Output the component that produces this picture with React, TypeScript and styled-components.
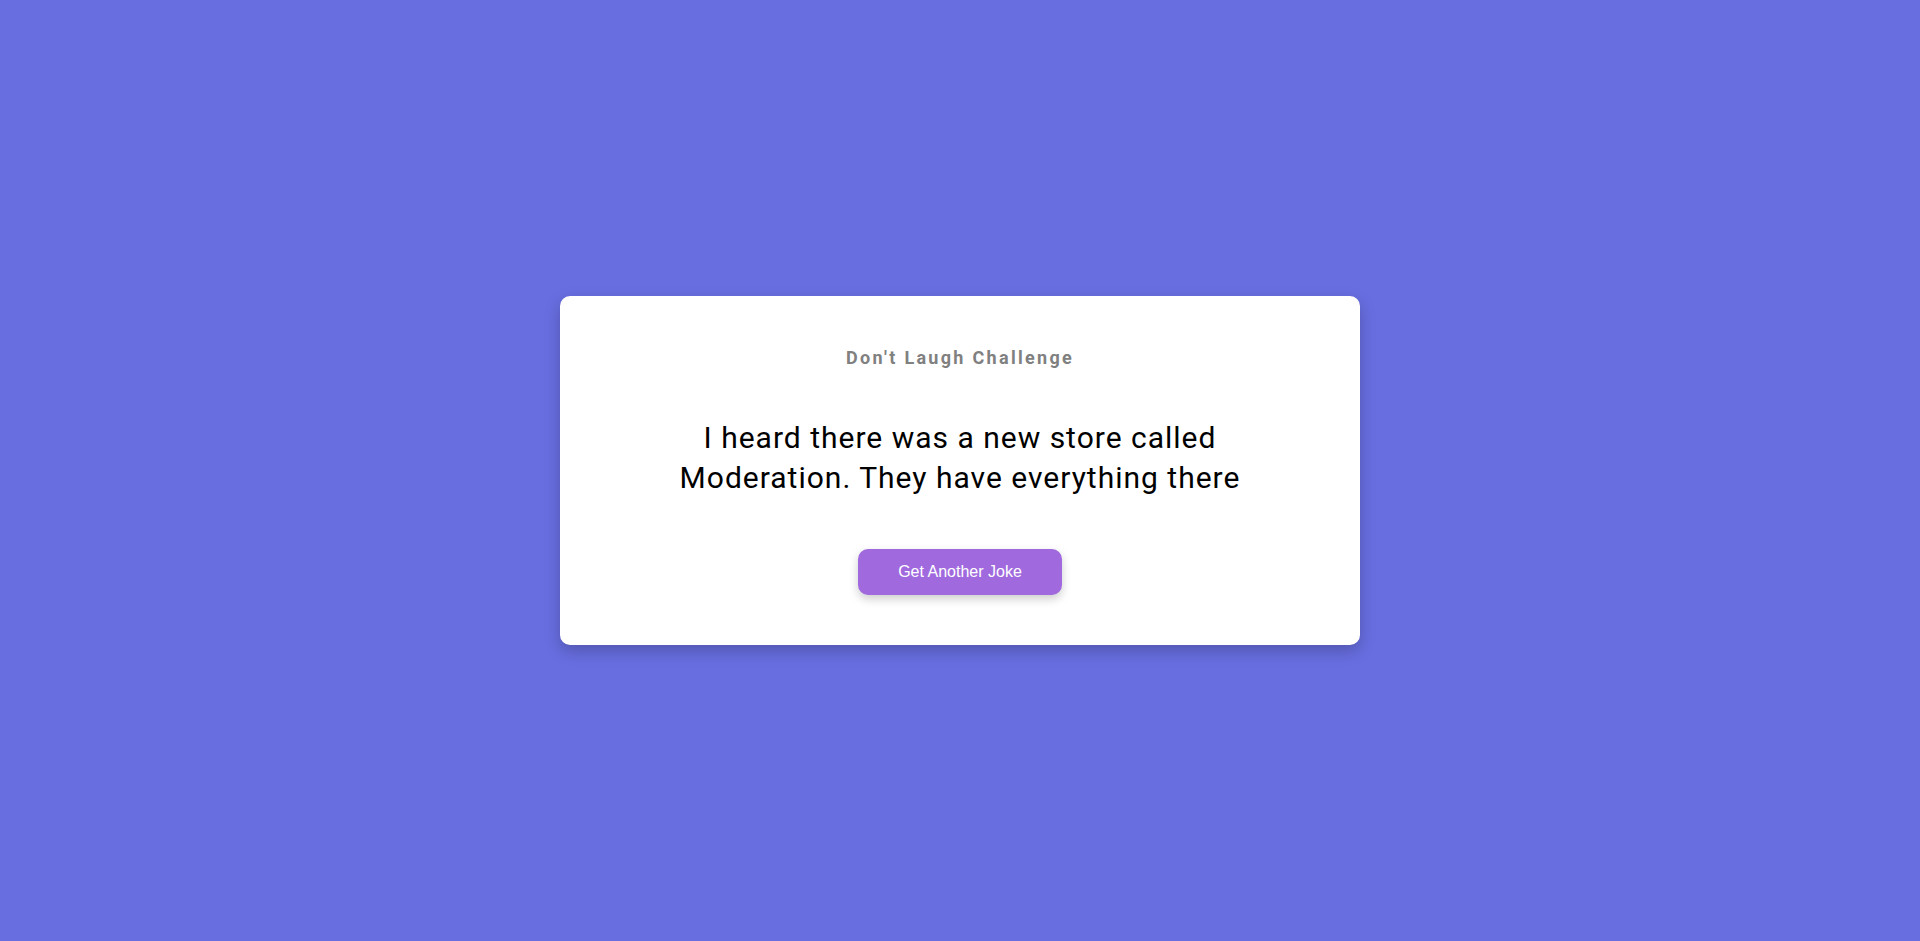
import React from "react";
import styled, { createGlobalStyle } from "styled-components";

const Global = createGlobalStyle`
  html, body { margin: 0; padding: 0; }
  body { background: #686ee0; font-family: Roboto, "Liberation Sans", sans-serif; }
`;

const Page = styled.main`
  min-height: 941px;
  display: flex;
  align-items: center;
  justify-content: center;
`;

const Card = styled.section`
  width: 800px;
  box-sizing: border-box;
  background: #ffffff;
  border-radius: 10px;
  padding: 50px 80px;
  display: flex;
  flex-direction: column;
  align-items: center;
  text-align: center;
  box-shadow: 0 6px 16px rgba(0, 0, 0, 0.22);
`;

const Title = styled.h3`
  margin: 0;
  font-family: Roboto, sans-serif;
  font-size: 18px;
  line-height: 24px;
  font-weight: 700;
  letter-spacing: 2.3px;
  color: #808080;
`;

const Joke = styled.p`
  margin: 48px 0 51px;
  font-family: Roboto, sans-serif;
  font-size: 30px;
  line-height: 40px;
  font-weight: 400;
  letter-spacing: 1px;
  color: #000000;
`;

const Button = styled.button`
  width: 204px;
  height: 46px;
  border: none;
  border-radius: 10px;
  background: #a06ade;
  color: #ffffff;
  font-family: "Liberation Sans", Arial, sans-serif;
  font-size: 16px;
  cursor: pointer;
  box-shadow: 0 4px 10px rgba(0, 0, 0, 0.2);
`;

export default function App() {
  return (
    <>
      <Global />
      <Page>
        <Card>
          <Title>Don't Laugh Challenge</Title>
          <Joke>
            I heard there was a new store called Moderation. They have everything there
          </Joke>
          <Button>Get Another Joke</Button>
        </Card>
      </Page>
    </>
  );
}
